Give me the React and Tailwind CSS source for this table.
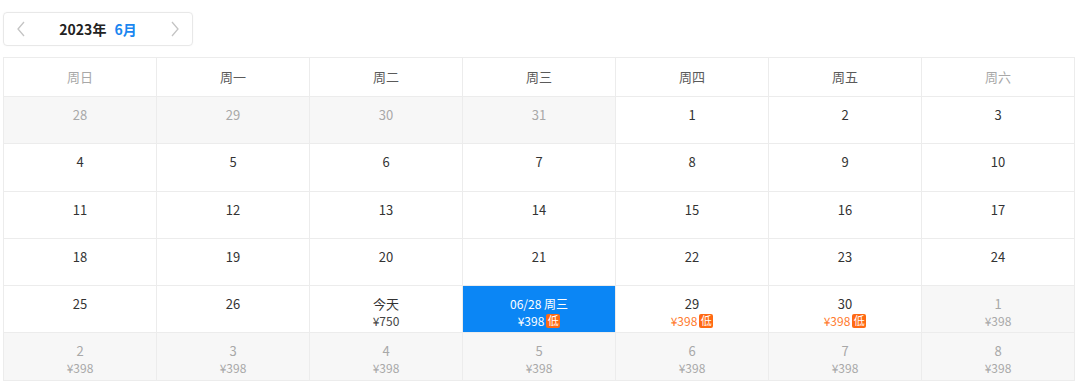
import React from "react";

const font = { fontFamily: '"Noto Sans CJK SC", "Noto Sans", sans-serif' };

function Badge() {
  return (
    <span className="ml-[2px] inline-flex h-[14px] w-[14px] items-center justify-center rounded-[2px] bg-[#ff6a13] text-[11px] leading-none text-white">
      低
    </span>
  );
}

function Cell({ c }) {
  const base = "flex flex-col items-center pt-[9px] border-r border-b border-[#ececec] text-[13px] leading-[17px]";
  if (c.sel) {
    return (
      <div className={`${base} bg-[#0b86f5] text-white`}>
        <div className="text-[12px]">06/28 周三</div>
        <div className="flex items-center text-[12px]">
          ¥398
          <Badge />
        </div>
      </div>
    );
  }
  const out = c.out;
  return (
    <div className={`${base} ${out ? "bg-[#f7f7f7] text-[#a8a8a8]" : "bg-white text-[#333]"}`}>
      <div>{c.d}</div>
      {c.p && (
        <div className={`flex items-center text-[12px] ${c.low ? "text-[#ff7a2e]" : out ? "text-[#a8a8a8]" : "text-[#444]"}`}>
          ¥{c.p}
          {c.low && <Badge />}
        </div>
      )}
    </div>
  );
}

export default function App() {
  const heads = ["周日", "周一", "周二", "周三", "周四", "周五", "周六"];
  const cells = [];
  [28, 29, 30, 31].forEach((d) => cells.push({ d, out: true }));
  for (let d = 1; d <= 24; d++) cells.push({ d });
  cells.push({ d: 25 }, { d: 26 }, { d: "今天", p: "750" }, { sel: true }, { d: 29, p: "398", low: true }, { d: 30, p: "398", low: true }, { d: 1, p: "398", out: true });
  for (let d = 2; d <= 8; d++) cells.push({ d, p: "398", out: true });

  return (
    <div className="h-[385px] w-[1080px] bg-white" style={font}>
      <div className="pl-[3px] pt-[12px]">
        <div className="flex h-[34px] w-[190px] items-center justify-between rounded-[4px] border border-[#e8e8e8] px-[11px] shadow-[0_0_2px_rgba(0,0,0,0.04)]">
          <svg width="12" height="18" viewBox="0 0 12 18" fill="none" stroke="#c4c4c4" strokeWidth="1.3">
            <path d="M9 2 L3 9 L9 16" />
          </svg>
          <div className="flex items-center gap-[8px] text-[14px] font-bold">
            <span className="text-[#222]">2023年</span>
            <span className="text-[#1a86f0]">6月</span>
          </div>
          <svg width="12" height="18" viewBox="0 0 12 18" fill="none" stroke="#c4c4c4" strokeWidth="1.3">
            <path d="M3 2 L9 9 L3 16" />
          </svg>
        </div>
        <div className="mt-[11px] w-[1072px] border-l border-t border-[#ececec]">
          <div className="grid h-[39px] grid-cols-7">
            {heads.map((h, i) => (
              <div
                key={h}
                className={`flex items-center justify-center border-r border-b border-[#ececec] text-[13px] ${i === 0 || i === 6 ? "text-[#a8a8a8]" : "text-[#5a5a5a]"}`}
              >
                {h}
              </div>
            ))}
          </div>
          <div className="grid grid-cols-7 auto-rows-[47.3px]">
            {cells.map((c, i) => (
              <Cell key={i} c={c} />
            ))}
          </div>
        </div>
      </div>
    </div>
  );
}
